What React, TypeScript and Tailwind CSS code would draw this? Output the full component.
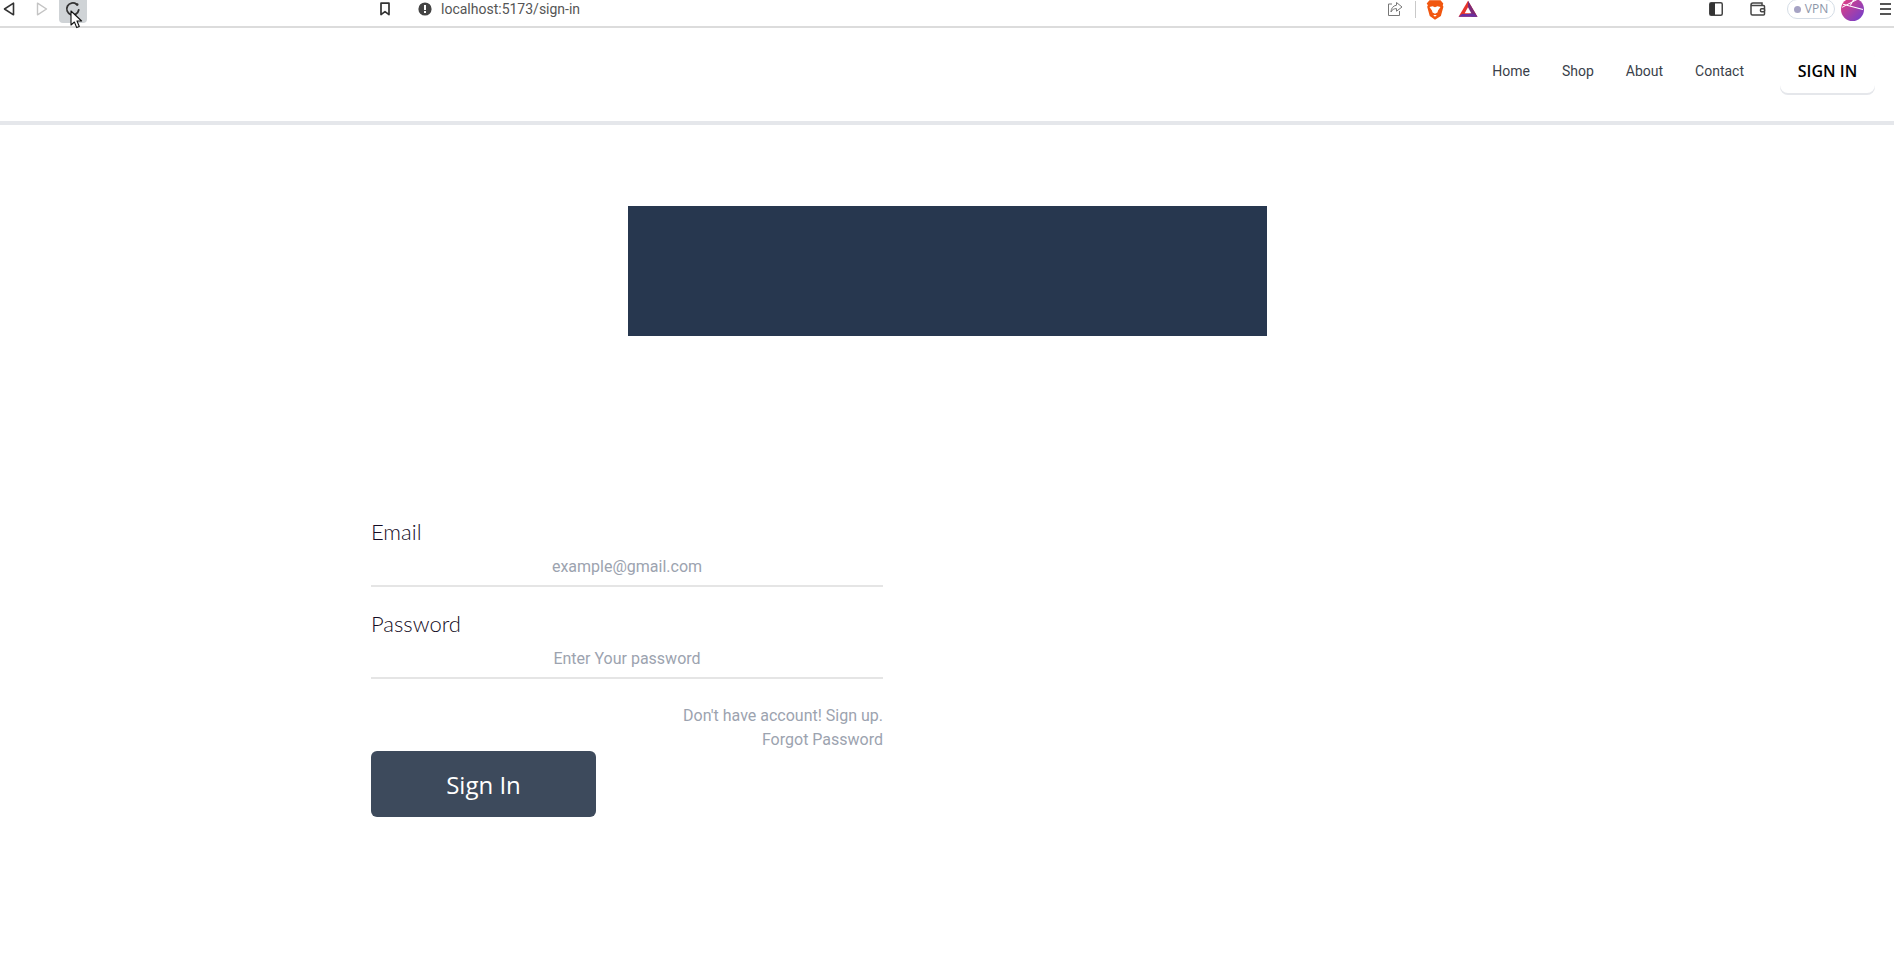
import React from "react";

function Toolbar() {
  return (
    <div className="flex h-[28px] items-start border-b-2 border-[#dcdcdc] bg-white text-[#4a4a4a] font-['Open_Sans',sans-serif]">
      <svg className="ml-[3px] mt-[2px] shrink-0" width="12" height="14" viewBox="0 0 12 14" fill="none" stroke="#333" strokeWidth="1.6" strokeLinejoin="round"><path d="M10.5 1.2v11.6L1.5 7z" /></svg>
      <svg className="ml-[21px] mt-[2px] shrink-0" width="12" height="14" viewBox="0 0 12 14" fill="none" stroke="#c4c4c4" strokeWidth="1.4" strokeLinejoin="round"><path d="M1.5 1.2v11.6L10.5 7z" /></svg>
      <div className="ml-[11px] flex h-[23px] w-[28px] shrink-0 justify-center rounded-b-[4px] bg-[#cfd3d6] pt-[1px]">
        <svg width="16" height="16" viewBox="0 0 16 16" fill="none" stroke="#333" strokeWidth="1.8" strokeLinecap="round"><path d="M11.5 3.2A6 6 0 1 0 13.7 9" /><circle cx="12.2" cy="3.6" r="1.3" fill="#333" stroke="none" /></svg>
      </div>
      <svg className="relative left-[-17px] mt-[10px] shrink-0" width="13" height="19" viewBox="0 0 13 19"><path d="M1 1v14l3.4-3 2.3 5.6 2.6-1.1L7 11h4.6z" fill="#fff" stroke="#111" strokeWidth="1.1" strokeLinejoin="round" /></svg>
      <svg className="ml-[279px] mt-[2px] shrink-0" width="12" height="14" viewBox="0 0 12 14" fill="none" stroke="#333" strokeWidth="1.7" strokeLinejoin="round"><path d="M2 1.2h8v11.4L6 9.6l-4 3z" /></svg>
      <svg className="ml-[27px] mt-[2px] shrink-0" width="14" height="14" viewBox="0 0 14 14"><circle cx="7" cy="7" r="6.6" fill="#444" /><rect x="6" y="3" width="2" height="5" fill="#fff" /><rect x="6" y="9" width="2" height="2" fill="#fff" /></svg>
      <span className="ml-[9px] mt-[-1px] w-[137px] shrink-0 whitespace-nowrap text-[14px] leading-[20px] text-[#555] font-['Roboto',sans-serif]">localhost:5173/sign-in</span>
      <svg className="ml-[809px] mt-[1px] shrink-0" width="16" height="16" viewBox="0 0 16 16" fill="none" stroke="#777" strokeWidth="1"><path d="M5 3H1.5v11.5h11V10" /><path d="M9.5 1.5 15 6l-5.5 4.2V7.6C7 7.6 5 8.6 4 11c0-3.5 2-6.3 5.5-6.8z" /></svg>
      <div className="ml-[12px] mt-[1px] h-[17px] w-px shrink-0 bg-[#c9c9c9]" />
      <svg className="ml-[9px] mt-[-1px] shrink-0" width="20" height="22" viewBox="0 0 16 18"><path d="M3.5 1h9l2.3 2.6-.5 1.6.6 1.2-2.1 7.6L8 17 3.700 14 1.600 6.400l.6-1.200L1.200 3.600z" fill="#f1560f" /><path d="M3.5 6.500 6 6l2 .8L10 6l2.500.5-2 3-.5 1.500L8 12l-2-1-.5-1.500zM6.500 13h3L8 14.500z" fill="#fff" /></svg>
      <svg className="ml-[13px] shrink-0" width="20" height="18" viewBox="0 0 18 16"><path d="M9 .5 17.500 15H.5z" fill="#e5342b" /><path d="M9 .5 17.500 15h-5.300L9 9.500z" fill="#7b2a78" /><path d="M.5 15l3.100-2.600h10.800l3.100 2.600z" fill="#6a2fa0" /><path d="M9 6.500 12 11.800H6z" fill="#fff" /></svg>
      <svg className="ml-[231px] mt-[2px] shrink-0" width="14" height="14" viewBox="0 0 14 14" fill="none"><rect x=".75" y=".75" width="12.500" height="12.500" rx="1.500" stroke="#444" strokeWidth="1.500" /><rect x="1" y="1" width="5" height="12" fill="#333" /></svg>
      <svg className="ml-[27px] mt-[2px] shrink-0" width="16" height="14" viewBox="0 0 16 14" fill="none" stroke="#444" strokeWidth="1.500"><path d="M1 3.500h12.500a1 1 0 0 1 1 1V12a1 1 0 0 1-1 1H2.500A1.500 1.500 0 0 1 1 11.500V3a2 2 0 0 1 2-2h9v2.500" /><rect x="10.500" y="6.700" width="4" height="3" rx="1" fill="#fff" /></svg>
      <div className="ml-[21px] mt-[-1px] flex h-[20px] w-[48px] shrink-0 items-center justify-center gap-[4px] rounded-full border border-[#d5dde6] text-[12px] leading-none text-[#8d96a8]">
        <span className="h-[7px] w-[7px] rounded-full bg-[#a6a3c4]" />
        <span>VPN</span>
      </div>
      <svg className="ml-[6px] mt-[-2px] shrink-0" width="23" height="23" viewBox="0 0 22 22">
        <defs><linearGradient id="av" x1="0" y1="0" x2="1" y2="1"><stop offset="0" stopColor="#ec3f7c" /><stop offset="1" stopColor="#6a3fd0" /></linearGradient></defs>
        <circle cx="11" cy="11" r="11" fill="url(#av)" />
        <path d="M1 9 16 1M2 6l19 5M9 7l4-7" stroke="#fff" strokeWidth="1" fill="none" />
      </svg>
      <svg className="ml-[16px] mt-[3px] shrink-0" width="11" height="12" viewBox="0 0 11 12" fill="#555"><rect y="0" width="11" height="2" /><rect y="5" width="11" height="2" /><rect y="10" width="11" height="2" /></svg>
    </div>
  );
}

function Header() {
  return (
    <header className="flex h-[97px] items-start justify-end gap-[32px] border-b-4 border-[#e5e7eb] bg-white pr-[19px] pt-[21px] font-['Open_Sans',sans-serif]">
      <nav className="flex h-[44px] items-center gap-[32px] text-[14px] text-[#3a3f4a] font-['Roboto',sans-serif]">
        <a>Home</a>
        <a>Shop</a>
        <a>About</a>
        <a>Contact</a>
      </nav>
      <button className="ml-[4px] h-[44px] w-[95px] rounded-lg bg-white text-[16px] font-semibold text-black shadow-[0_2px_0_#e5e7eb]">SIGN IN</button>
    </header>
  );
}

function Field({ label, placeholder, type }: { label: string; placeholder: string; type: string }) {
  return (
    <div className="flex flex-col">
      <label className="mt-[-1px] h-[29px] text-[22px] font-light leading-[28px] text-[#140c24] font-['Lato',sans-serif]">{label}</label>
      <input
        type={type}
        placeholder={placeholder}
        className="h-[40px] w-full border-b-2 border-[#e5e5e5] bg-white pt-[1px] text-center text-[16px] outline-none placeholder:text-[#9ca3af] font-['Roboto',sans-serif]"
      />
    </div>
  );
}

export default function App() {
  return (
    <div className="min-h-[966px] bg-white">
      <Toolbar />
      <Header />
      <main className="flex flex-col items-center">
        <div className="mt-[81px] h-[130px] w-[639px] bg-[#27374f]" />
        <div className="mt-[183px] w-[1152px]">
          <form className="flex w-[512px] flex-col gap-[24px]">
            <Field label="Email" placeholder="example@gmail.com" type="email" />
            <Field label="Password" placeholder="Enter Your password" type="password" />
            <div className="flex flex-col">
              <div className="pt-[1px] text-right text-[16px] leading-[24px] text-[#9ca3af] font-['Roboto',sans-serif]">
                <p>Don't have account! Sign up.</p>
                <p className="mb-[-1px]">Forgot Password</p>
              </div>
              <button type="button" className="h-[66px] w-[225px] rounded-[6px] bg-[#3d4a5c] pt-[2px] text-[24px] text-white font-['Open_Sans',sans-serif]">Sign In</button>
            </div>
          </form>
        </div>
      </main>
    </div>
  );
}
